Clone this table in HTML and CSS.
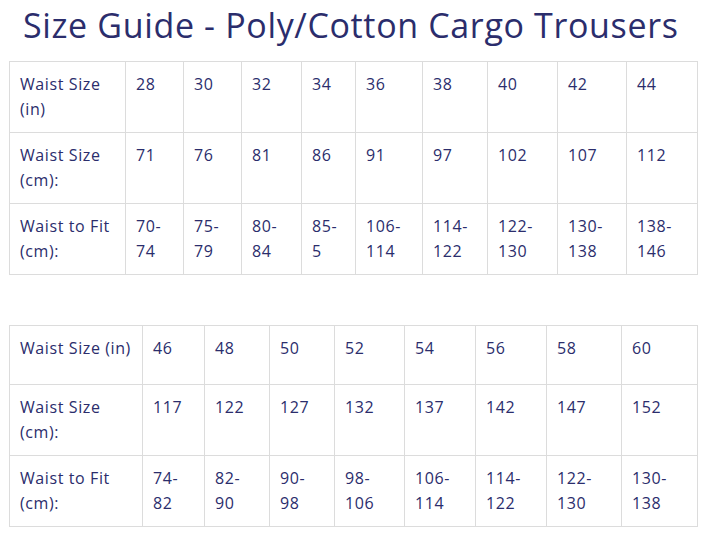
FILE: index.html
```html
<!DOCTYPE html>
<html>
<head>
<meta charset="utf-8">
<link rel="stylesheet" href="styles.css">
</head>
<body>
<h1 class="title">Size Guide - Poly/Cotton Cargo Trousers</h1>
<table class="sizes sizes-a">
  <colgroup>
    <col class="a1"><col class="a2"><col class="a3"><col class="a4"><col class="a5"><col class="a6"><col class="a7"><col class="a8"><col class="a9"><col class="a10">
  </colgroup>
  <tr>
    <td>Waist Size (in)</td><td>28</td><td>30</td><td>32</td><td>34</td><td>36</td><td>38</td><td>40</td><td>42</td><td>44</td>
  </tr>
  <tr>
    <td>Waist Size (cm):</td><td>71</td><td>76</td><td>81</td><td>86</td><td>91</td><td>97</td><td>102</td><td>107</td><td>112</td>
  </tr>
  <tr>
    <td>Waist to Fit (cm):</td><td>70-74</td><td>75-79</td><td>80-84</td><td>85-5</td><td>106-114</td><td>114-122</td><td>122-130</td><td>130-138</td><td>138-146</td>
  </tr>
</table>
<table class="sizes sizes-b">
  <colgroup>
    <col class="b1"><col class="b2"><col class="b3"><col class="b4"><col class="b5"><col class="b6"><col class="b7"><col class="b8"><col class="b9">
  </colgroup>
  <tr class="short">
    <td>Waist Size (in)</td><td>46</td><td>48</td><td>50</td><td>52</td><td>54</td><td>56</td><td>58</td><td>60</td>
  </tr>
  <tr>
    <td>Waist Size (cm):</td><td>117</td><td>122</td><td>127</td><td>132</td><td>137</td><td>142</td><td>147</td><td>152</td>
  </tr>
  <tr>
    <td>Waist to Fit (cm):</td><td>74-82</td><td>82-90</td><td>90-98</td><td>98-106</td><td>106-114</td><td>114-122</td><td>122-130</td><td>130-138</td>
  </tr>
</table>
</body>
</html>
```
FILE: styles.css
```css
html, body {
  margin: 0;
  padding: 0;
  background: #fff;
}
body {
  padding: 0 0 0 9px;
  font-family: "Open Sans", Lato, sans-serif;
  color: #2b2d6c;
}
.title {
  margin: 0;
  padding: 3px 0 0 14px;
  font-size: 34px;
  line-height: 44px;
  font-weight: 400;
  letter-spacing: 0.65px;
  height: 58px;
  box-sizing: border-box;
}
.sizes {
  border-collapse: collapse;
  table-layout: fixed;
  width: 688px;
  font-size: 16px;
  line-height: 25px;
  letter-spacing: 0.6px;
}
.sizes td {
  border: 1px solid #dcdcdc;
  padding: 10px 10px;
  vertical-align: top;
  height: 50px;
}
.sizes .short td {
  height: 38px;
}
.sizes-a {
  margin-top: 3px;
}
.sizes-b {
  margin-top: 50px;
}
.a1 { width: 116px; }
.a2 { width: 58px; }
.a3 { width: 58px; }
.a4 { width: 60px; }
.a5 { width: 54px; }
.a6 { width: 67px; }
.a7 { width: 65px; }
.a8 { width: 70px; }
.a9 { width: 69px; }
.a10 { width: 71px; }
.b1 { width: 133px; }
.b2 { width: 62px; }
.b3 { width: 65px; }
.b4 { width: 65px; }
.b5 { width: 70px; }
.b6 { width: 71px; }
.b7 { width: 71px; }
.b8 { width: 75px; }
.b9 { width: 76px; }
```
